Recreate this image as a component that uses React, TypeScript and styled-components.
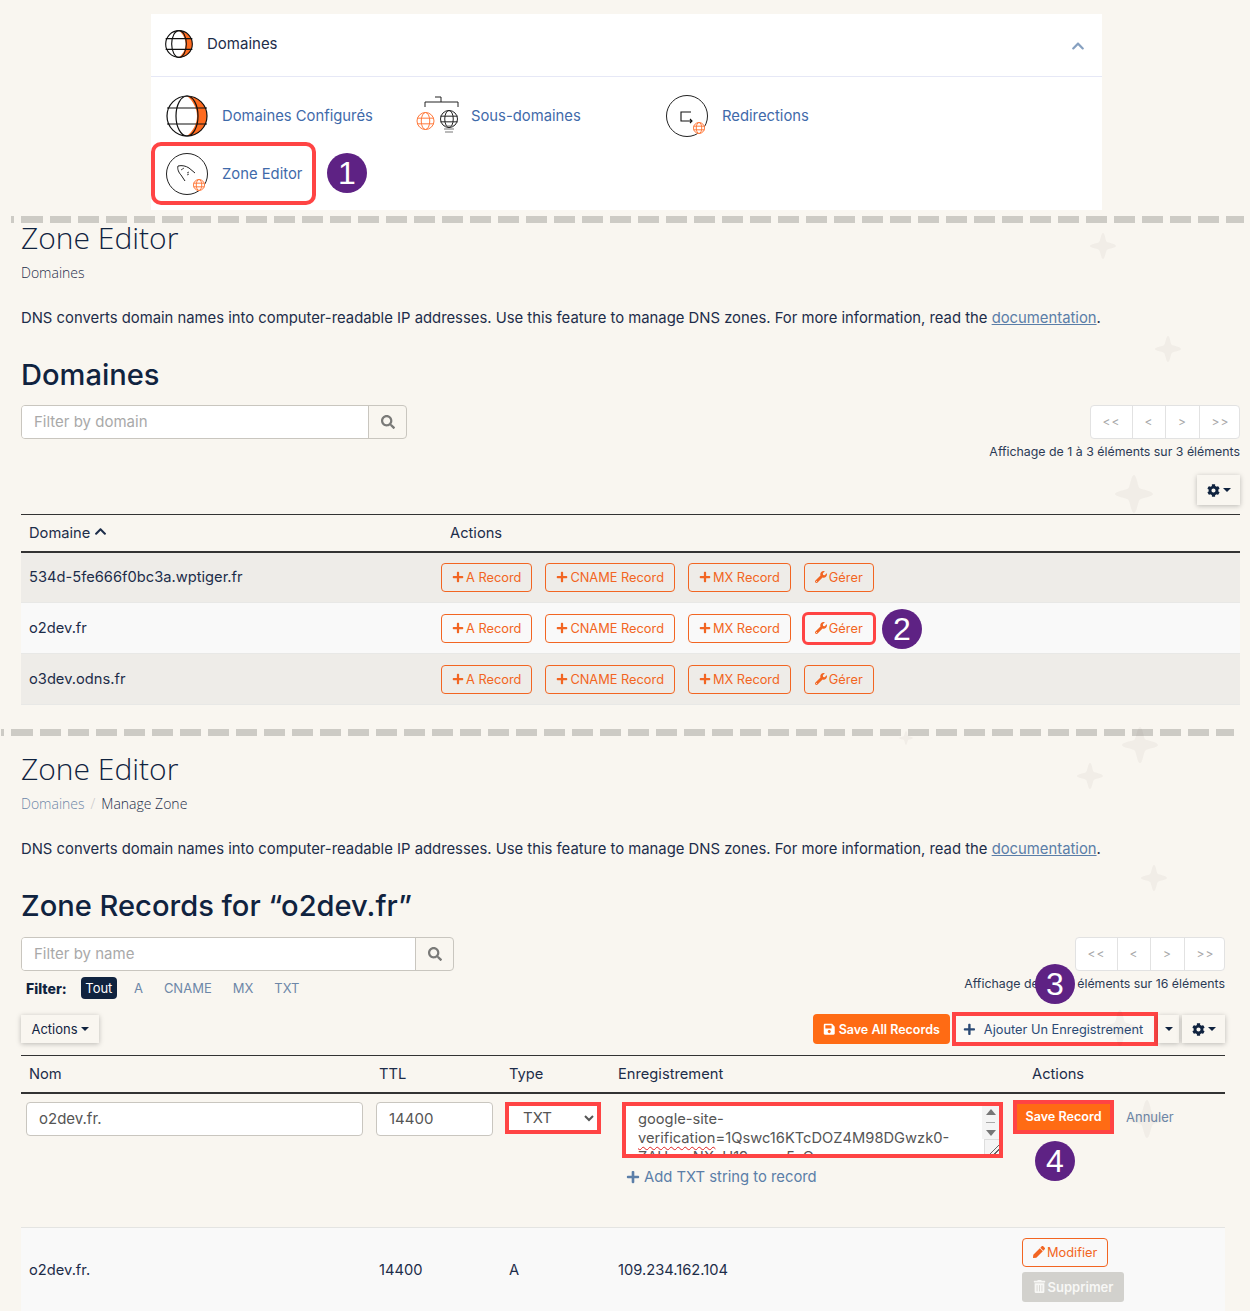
import React from 'react';
import styled, { createGlobalStyle } from 'styled-components';
import { FaChevronUp, FaCog, FaPen, FaPlus, FaSave, FaSearch, FaTrashAlt, FaWrench } from 'react-icons/fa';

const ORANGE = '#f26522';
const RED = '#ff4444';
const INK = '#10233f';

const GlobalStyle = createGlobalStyle`
  html, body { margin: 0; padding: 0; background: #f9f6f0; }
  body { font-family: Inter, "Noto Sans", sans-serif; color: ${INK}; }
  * { box-sizing: border-box; }
`;

const Page = styled.div`
  position: relative;
  width: 1250px;
  height: 1311px;
  overflow: hidden;
  padding-top: 14px;
`;

const Sparkle = styled.svg<{ $x: number; $y: number; $size: number }>`
  position: absolute;
  left: ${p => p.$x - p.$size / 2}px;
  top: ${p => p.$y - p.$size / 2}px;
  width: ${p => p.$size}px;
  height: ${p => p.$size}px;
  fill: rgba(60, 50, 40, 0.045);
  pointer-events: none;
`;

const Badge = styled.div<{ $x: number; $y: number }>`
  position: absolute;
  left: ${p => p.$x}px;
  top: ${p => p.$y}px;
  width: 40px;
  height: 40px;
  border-radius: 50%;
  background: #5e2284;
  color: #fff;
  display: flex;
  align-items: center;
  justify-content: center;
  font: 32px "Liberation Sans", sans-serif;
`;

const Card = styled.div`
  width: 951px;
  margin-left: 151px;
  background: #fff;
`;

const CardHeader = styled.div`
  height: 63px;
  display: flex;
  align-items: center;
  padding: 0 17px 3px 14px;
  gap: 14px;
  border-bottom: 1px solid #e6e8f6;
  font-size: 15px;
  color: #1d2d4a;
`;

const Collapse = styled.span`
  margin-left: auto;
  margin-top: 5px;
  display: flex;
  color: #86a0c0;
  font-size: 14px;
`;

const CardBody = styled.div`
  display: grid;
  grid-template-columns: repeat(3, 250px);
  grid-template-rows: 52px 63px;
  padding: 13px 0 5px;
`;

const Item = styled.a<{ $marked?: boolean }>`
  display: flex;
  align-items: center;
  gap: 14px;
  padding-left: ${p => (p.$marked ? 11 : 15)}px;
  font-size: 14.8px;
  color: #3f6aaa;
  ${p => p.$marked && `border: 4px solid ${RED}; border-radius: 10px; width: 165px;`}
`;

const Divider = styled.div<{ $left: number; $right: number; $top: number; $after: number }>`
  height: 7px;
  margin: ${p => p.$top}px ${p => p.$right}px ${p => p.$after}px ${p => p.$left}px;
  background: repeating-linear-gradient(90deg, #cdcbc5 0 21px, transparent 21px 28px);
  background-position-x: 11px;
`;

const Section = styled.section<{ $right: number }>`
  padding: 0 ${p => p.$right}px 0 21px;
`;

const Title = styled.h1`
  margin: -1px 0 0;
  font: 300 30px/36px "Open Sans", sans-serif;
  color: ${INK};
`;

const Crumbs = styled.div`
  margin-top: 7px;
  display: flex;
  gap: 6px;
  font: 300 14px/20px "Open Sans", sans-serif;
  color: #1d2d4a;
`;

const CrumbLink = styled.span`
  color: #6d87a8;
`;

const CrumbSep = styled.span`
  color: #c8c8c8;
`;

const Desc = styled.p`
  margin: 25px 0 0;
  font-size: 14.83px;
  line-height: 20px;
  color: #1d2d4a;
`;

const DocLink = styled.a`
  color: #5b7ea8;
  text-decoration: underline;
`;

const Heading = styled.h2`
  margin: 27px 0 0;
  font-size: 29.1px;
  font-weight: 500;
  line-height: 40px;
  color: ${INK};
`;

const Toolbar = styled.div<{ $top: number; $height: number }>`
  margin-top: ${p => p.$top}px;
  height: ${p => p.$height}px;
  display: flex;
  justify-content: space-between;
  align-items: flex-start;
`;

const SearchBox = styled.div<{ $width: number }>`
  width: ${p => p.$width}px;
  height: 34px;
  display: flex;
  border: 1px solid #c9c6bf;
  border-radius: 4px;
  overflow: hidden;
`;

const SearchInput = styled.input`
  flex: 1;
  min-width: 0;
  border: 0;
  padding: 0 12px 2px;
  background: #fff;
  font: 15px Inter, sans-serif;
  &::placeholder { color: #a9a9a9; opacity: 1; }
`;

const SearchButton = styled.span`
  width: 38px;
  display: flex;
  align-items: center;
  justify-content: center;
  border-left: 1px solid #c9c6bf;
  color: #7a7a78;
  font-size: 14px;
`;

const RightColumn = styled.div`
  display: flex;
  flex-direction: column;
  align-items: flex-end;
`;

const Pager = styled.div`
  width: 150px;
  height: 34px;
  display: grid;
  grid-template-columns: 41px 33px 34px 42px;
  background: #fff;
  border: 1px solid #e2e2e2;
  border-radius: 4px;
`;

const PagerCell = styled.span`
  display: flex;
  align-items: center;
  justify-content: center;
  padding-bottom: 1px;
  font-size: 12px;
  letter-spacing: 1px;
  color: #a8a8a8;
  & + & { border-left: 1px solid #e2e2e2; }
`;

const Showing = styled.div`
  margin-top: 3px;
  font-size: 12.35px;
  line-height: 20px;
  color: #2b3a55;
  white-space: nowrap;
`;

const ShadowButton = styled.button<{ $width: number; $height: number }>`
  width: ${p => p.$width}px;
  height: ${p => p.$height}px;
  padding: 0;
  display: flex;
  align-items: center;
  justify-content: center;
  gap: 3px;
  border: 0;
  background: #f9f6f0;
  box-shadow: 0 1px 5px rgba(0, 0, 0, 0.25);
  font: 13px Inter, sans-serif;
  color: ${INK};
`;

const Caret = styled.i`
  display: inline-block;
  border: 4px solid transparent;
  border-top-color: ${INK};
  border-bottom: 0;
`;

const GearButton = styled(ShadowButton)`
  margin-top: 13px;
`;

const Table = styled.table<{ $width: number }>`
  width: ${p => p.$width}px;
  table-layout: fixed;
  border-collapse: collapse;
  font-size: 14.7px;
  color: #1d2d4a;
`;

const HeadRow = styled.tr`
  border-top: 1px solid #333;
  border-bottom: 2px solid #333;
  height: 37px;
`;

const Th = styled.th<{ $pad?: number; $width?: number }>`
  width: ${p => (p.$width ? `${p.$width}px` : 'auto')};
  padding: 0 0 0 ${p => p.$pad ?? 8}px;
  text-align: left;
  font-weight: 400;
`;

const SortUp = styled.span`
  font-size: 13px;
  margin-left: 4px;
`;

const Row = styled.tr<{ $alt?: boolean }>`
  height: 51px;
  background: ${p => (p.$alt ? '#f9f9f9' : '#eeece8')};
  border-bottom: 1px solid #e8e8e6;
`;

const Td = styled.td<{ $pad?: number }>`
  padding: 0 0 0 ${p => p.$pad ?? 8}px;
`;

const Buttons = styled.div`
  display: flex;
  gap: 13px;
`;

const OutlineButton = styled.a<{ $marked?: boolean }>`
  height: 29px;
  padding: 0 10px;
  display: inline-flex;
  align-items: center;
  gap: 2px;
  border: 1px solid ${ORANGE};
  border-radius: 4px;
  font-size: 12.8px;
  color: ${ORANGE};
  white-space: nowrap;
  ${p => p.$marked && `outline: 3px solid ${RED}; outline-offset: -1px; border-color: transparent;`}
  svg { font-size: 12px; }
`;

const FilterRow = styled.div`
  margin-top: 5px;
  display: flex;
  align-items: center;
  height: 24px;
  padding-left: 5px;
  font-size: 14px;
`;

const FilterLabel = styled.b`
  margin-right: 14px;
  font-weight: 800;
`;

const FilterTab = styled.span<{ $active?: boolean }>`
  height: 22px;
  padding: 0 ${p => (p.$active ? 4.5 : 4)}px;
  margin-right: 13px;
  display: flex;
  align-items: center;
  font-size: 13px;
  border-radius: 4px;
  color: ${p => (p.$active ? '#fff' : '#6d87a8')};
  background: ${p => (p.$active ? INK : 'transparent')};
`;

const ActionsRow = styled.div`
  margin-bottom: 11px;
  height: 30px;
  display: flex;
  align-items: center;
`;

const RightActions = styled.div`
  margin-left: auto;
  display: flex;
  align-items: center;
`;

const SaveAll = styled.button`
  width: 137px;
  height: 30px;
  margin-right: 2px;
  padding: 0;
  display: flex;
  align-items: center;
  justify-content: center;
  gap: 3px;
  border: 0;
  border-radius: 4px;
  background: #ff6b14;
  color: #fff;
  font: 600 12.5px Inter, sans-serif;
`;

const AddButton = styled.button`
  width: 206px;
  height: 34px;
  padding: 0 0 0 7px;
  display: flex;
  align-items: center;
  gap: 8px;
  border: 4px solid ${RED};
  background: #fbf9f5;
  font: 12.8px Inter, sans-serif;
  color: #2b4a75;
`;

const SplitCaret = styled(ShadowButton)`
  margin-right: 3px;
`;

const TextField = styled.input<{ $width: number }>`
  width: ${p => p.$width}px;
  height: 34px;
  padding: 0 12px 1px;
  border: 1px solid #c9c6bf;
  border-radius: 4px;
  background: #fff;
  font: 15px Inter, sans-serif;
  color: #555;
`;

const EditRow = styled.tr`
  height: 135px;
  border-bottom: 1px solid #e4e4e2;
  vertical-align: top;
`;

const EditCell = styled.td<{ $pad: number }>`
  padding: 8px 0 0 ${p => p.$pad}px;
`;

const TypeSelect = styled.select`
  width: 96px;
  height: 32px;
  padding-left: 10px;
  border: 4px solid ${RED};
  border-radius: 0;
  background: #fff;
  font: 15px Inter, sans-serif;
  color: #555;
`;

const RecordBox = styled.div`
  position: relative;
  width: 381px;
  height: 56px;
  padding: 4px 30px 0 12px;
  border: 4px solid ${RED};
  background: #fff;
  overflow: hidden;
  font-size: 14.7px;
  line-height: 19px;
  color: #555;
`;

const Misspelled = styled.span`
  text-decoration: underline wavy #e02020 1px;
  text-underline-offset: 3px;
`;

const ScrollArrows = styled.div`
  position: absolute;
  top: 0;
  right: 0;
  width: 17px;
  height: 33px;
  display: flex;
  flex-direction: column;
  align-items: center;
  justify-content: space-between;
  padding: 3px 0;
  background: #f4f4f4;
`;

const ScrollArrow = styled.i<{ $down?: boolean }>`
  display: block;
  border-left: 5px solid transparent;
  border-right: 5px solid transparent;
  ${p => (p.$down ? 'border-top: 6px solid #777;' : 'border-bottom: 6px solid #777;')}
`;

const ScrollThumb = styled.i`
  display: block;
  width: 9px;
  border-top: 1px solid #aaa;
`;

const Grip = styled.div`
  position: absolute;
  right: 0;
  bottom: 0;
  width: 15px;
  height: 15px;
  border: 1px solid #ddd;
  border-width: 1px 0 0 1px;
  background:
    linear-gradient(135deg, transparent 13px, #666 13px 14px, transparent 14px 16px, #666 16px 17px, transparent 17px),
    #f4f4f4;
`;

const AddString = styled.a`
  margin: 10px 0 0 4px;
  display: flex;
  align-items: center;
  gap: 4px;
  font-size: 14.8px;
  color: #5b7ea8;
  svg { font-size: 14px; }
`;

const SaveRecord = styled.button`
  width: 101px;
  height: 34px;
  padding: 0;
  border: 4px solid ${RED};
  background: #ff6b14;
  color: #fff;
  font: 600 12.6px Inter, sans-serif;
`;

const Cancel = styled.span`
  margin-left: 12px;
  font-size: 13px;
  color: #6d87a8;
`;

const SaveCell = styled.div`
  display: flex;
  align-items: center;
  margin-top: -2px;
`;

const LastRow = styled.tr`
  height: 84px;
  background: #f9f9f9;
`;

const RowActions = styled.div`
  display: flex;
  flex-direction: column;
  align-items: flex-start;
  gap: 5px;
`;

const DeleteButton = styled.span`
  width: 102px;
  height: 30px;
  display: flex;
  align-items: center;
  justify-content: center;
  gap: 2px;
  border-radius: 3px;
  background: #d2d1cd;
  color: #f7f7f5;
  font-size: 13px;
  font-weight: 600;
`;

const WideIcon = styled.svg`
  margin-right: -5px;
  flex: none;
`;

// domain globe with the orange crescent
const Globe = ({ size }: { size: number }) => (
  <svg width={size} height={size} viewBox="0 0 42 42" fill="none" stroke="#111" strokeWidth={size > 30 ? 1.2 : 1.7}>
    <path d="M21 1a20 20 0 0 1 0 40c6-5 10-12 10-20S27 6 21 1z" fill="#ff6b1f" stroke="none" />
    <circle cx="21" cy="21" r="20" />
    <ellipse cx="21" cy="21" rx="11" ry="20" />
    <path d="M1 13h40M1 29h40" />
  </svg>
);

const MiniGlobe = ({ x, y, r, color }: { x: number; y: number; r: number; color: string }) => (
  <g fill="none" stroke={color} strokeWidth="1">
    <circle cx={x} cy={y} r={r} fill="#fff" />
    <ellipse cx={x} cy={y} rx={r / 2} ry={r} />
    <path d={`M${x - r} ${y - r / 3}h${r * 2}M${x - r} ${y + r / 3}h${r * 2}`} />
  </g>
);

const SubdomainIcon = () => (
  <WideIcon width="46" height="42" viewBox="0 0 46 42" fill="none">
    <path d="M9 12V7h33v5M25 7V2h-6" stroke="#222" strokeWidth="1" />
    <MiniGlobe x={9.5} y={26} r={8.5} color="#ff7a3c" />
    <MiniGlobe x={33} y={24} r={8.5} color="#222" />
    <path d="M28 31h10M28 34h10M29 37h8" stroke="#777" strokeWidth="1.2" />
  </WideIcon>
);

const RedirectIcon = () => (
  <svg width="42" height="42" viewBox="0 0 42 42" fill="none">
    <circle cx="21" cy="21" r="20.5" stroke="#222" strokeWidth="1" />
    <path d="M25 17H15v9h11M24 24l2 2-2 2" stroke="#111" strokeWidth="1.1" />
    <MiniGlobe x={33} y={33} r={5.5} color="#ff7a3c" />
  </svg>
);

const ZoneIcon = () => (
  <svg width="42" height="42" viewBox="0 0 42 42" fill="none">
    <circle cx="21" cy="21" r="20.5" stroke="#222" strokeWidth="1" />
    <path d="M12 13c4-1 8 0 11 2l6 5M12 13c-1 3 1 7 3 9l4 6" stroke="#222" strokeWidth="1" />
    <path d="M15 17l3-2M21 20l2-1M21 22l2-1" stroke="#222" strokeWidth="0.8" />
    <MiniGlobe x={33} y={32} r={5.5} color="#ff7a3c" />
  </svg>
);

const Star = ({ x, y, size }: { x: number; y: number; size: number }) => (
  <Sparkle $x={x} $y={y} $size={size} viewBox="0 0 40 40">
    <path d="M20 0c3 0 4 13 6 14s14 3 14 6-12 4-14 6-3 14-6 14-4-12-6-14S0 23 0 20s12-4 14-6S17 0 20 0z" />
  </Sparkle>
);

const SearchField = ({ width, placeholder }: { width: number; placeholder: string }) => (
  <SearchBox $width={width}>
    <SearchInput placeholder={placeholder} />
    <SearchButton><FaSearch /></SearchButton>
  </SearchBox>
);

const Pagination = () => (
  <Pager>
    {['<<', '<', '>', '>>'].map(label => <PagerCell key={label}>{label}</PagerCell>)}
  </Pager>
);

const RecordButtons = ({ marked }: { marked?: boolean }) => (
  <Buttons>
    <OutlineButton><FaPlus />A Record</OutlineButton>
    <OutlineButton><FaPlus />CNAME Record</OutlineButton>
    <OutlineButton><FaPlus />MX Record</OutlineButton>
    <OutlineButton $marked={marked}><FaWrench />Gérer</OutlineButton>
  </Buttons>
);

const DOMAINS = ['534d-5fe666f0bc3a.wptiger.fr', 'o2dev.fr', 'o3dev.odns.fr'];

const Documentation = () => (
  <Desc>
    DNS converts domain names into computer-readable IP addresses. Use this feature to manage DNS zones. For more
    information, read the <DocLink>documentation</DocLink>.
  </Desc>
);

export default function App() {
  return (
    <Page>
      <GlobalStyle />
      <Card>
        <CardHeader>
          <Globe size={28} />
          Domaines
          <Collapse><FaChevronUp /></Collapse>
        </CardHeader>
        <CardBody>
          <Item><Globe size={42} />Domaines Configurés</Item>
          <Item><SubdomainIcon />Sous-domaines</Item>
          <Item><RedirectIcon />Redirections</Item>
          <Item $marked><ZoneIcon />Zone Editor</Item>
        </CardBody>
      </Card>

      <Divider $left={11} $right={6} $top={6} $after={-3} />
      <Section $right={10}>
        <Title>Zone Editor</Title>
        <Crumbs>Domaines</Crumbs>
        <Documentation />
        <Heading>Domaines</Heading>
        <Toolbar $top={10} $height={109}>
          <SearchField width={386} placeholder="Filter by domain" />
          <RightColumn>
            <Pagination />
            <Showing>Affichage de 1 à 3 éléments sur 3 éléments</Showing>
            <GearButton $width={43} $height={30}><FaCog /><Caret /></GearButton>
          </RightColumn>
        </Toolbar>
        <Table $width={1219}>
          <thead>
            <HeadRow>
              <Th $width={420}>Domaine<SortUp><FaChevronUp /></SortUp></Th>
              <Th $pad={9}>Actions</Th>
            </HeadRow>
          </thead>
          <tbody>
            {DOMAINS.map((name, i) => (
              <Row key={name} $alt={i === 1}>
                <Td>{name}</Td>
                <Td $pad={0}><RecordButtons marked={i === 1} /></Td>
              </Row>
            ))}
          </tbody>
        </Table>
      </Section>

      <Divider $left={1} $right={16} $top={24} $after={16} />
      <Section $right={25}>
        <Title>Zone Editor</Title>
        <Crumbs><CrumbLink>Domaines</CrumbLink><CrumbSep>/</CrumbSep>Manage Zone</Crumbs>
        <Documentation />
        <Heading>Zone Records for “o2dev.fr”</Heading>
        <Toolbar $top={11} $height={77}>
          <div>
            <SearchField width={433} placeholder="Filter by name" />
            <FilterRow>
              <FilterLabel>Filter:</FilterLabel>
              <FilterTab $active>Tout</FilterTab>
              <FilterTab>A</FilterTab>
              <FilterTab>CNAME</FilterTab>
              <FilterTab>MX</FilterTab>
              <FilterTab>TXT</FilterTab>
            </FilterRow>
          </div>
          <RightColumn>
            <Pagination />
            <Showing>Affichage de 1 à 16 éléments sur 16 éléments</Showing>
          </RightColumn>
        </Toolbar>
        <ActionsRow>
          <ShadowButton $width={78} $height={28}>Actions<Caret /></ShadowButton>
          <RightActions>
            <SaveAll><FaSave />Save All Records</SaveAll>
            <AddButton><FaPlus />Ajouter Un Enregistrement</AddButton>
            <SplitCaret $width={21} $height={28}><Caret /></SplitCaret>
            <ShadowButton $width={43} $height={28}><FaCog /><Caret /></ShadowButton>
          </RightActions>
        </ActionsRow>
        <Table $width={1204}>
          <thead>
            <HeadRow>
              <Th $width={350}>Nom</Th>
              <Th $width={130}>TTL</Th>
              <Th $width={109}>Type</Th>
              <Th $width={403}>Enregistrement</Th>
              <Th $pad={19}>Actions</Th>
            </HeadRow>
          </thead>
          <tbody>
            <EditRow>
              <EditCell $pad={5}><TextField $width={337} defaultValue="o2dev.fr." /></EditCell>
              <EditCell $pad={5}><TextField $width={117} defaultValue="14400" /></EditCell>
              <EditCell $pad={4}>
                <TypeSelect defaultValue="TXT"><option>TXT</option></TypeSelect>
              </EditCell>
              <EditCell $pad={12}>
                <RecordBox>
                  google-site-
                  <br />
                  <Misspelled>verification</Misspelled>=1Qswc16KTcDOZ4M98DGwzk0-
                  <br />
                  ZAHosxNXyU19ozmz5xQ
                  <ScrollArrows><ScrollArrow /><ScrollThumb /><ScrollArrow $down /></ScrollArrows>
                  <Grip />
                </RecordBox>
                <AddString><FaPlus />Add TXT string to record</AddString>
              </EditCell>
              <EditCell $pad={0}>
                <SaveCell><SaveRecord>Save Record</SaveRecord><Cancel>Annuler</Cancel></SaveCell>
              </EditCell>
            </EditRow>
            <LastRow>
              <Td>o2dev.fr.</Td>
              <Td>14400</Td>
              <Td>A</Td>
              <Td>109.234.162.104</Td>
              <Td $pad={9}>
                <RowActions>
                  <OutlineButton><FaPen />Modifier</OutlineButton>
                  <DeleteButton><FaTrashAlt />Supprimer</DeleteButton>
                </RowActions>
              </Td>
            </LastRow>
          </tbody>
        </Table>
      </Section>

      <Star x={1103} y={246} size={26} />
      <Star x={1168} y={349} size={26} />
      <Star x={1134} y={494} size={38} />
      <Star x={1090} y={776} size={26} />
      <Star x={1140} y={745} size={36} />
      <Star x={906} y={738} size={14} />
      <Star x={1154} y={878} size={26} />
      <Star x={1120} y={1028} size={36} />
      <Star x={1147} y={1119} size={38} />

      <Badge $x={327} $y={153}>1</Badge>
      <Badge $x={882} $y={609}>2</Badge>
      <Badge $x={1035} $y={964}>3</Badge>
      <Badge $x={1035} $y={1141}>4</Badge>
    </Page>
  );
}
